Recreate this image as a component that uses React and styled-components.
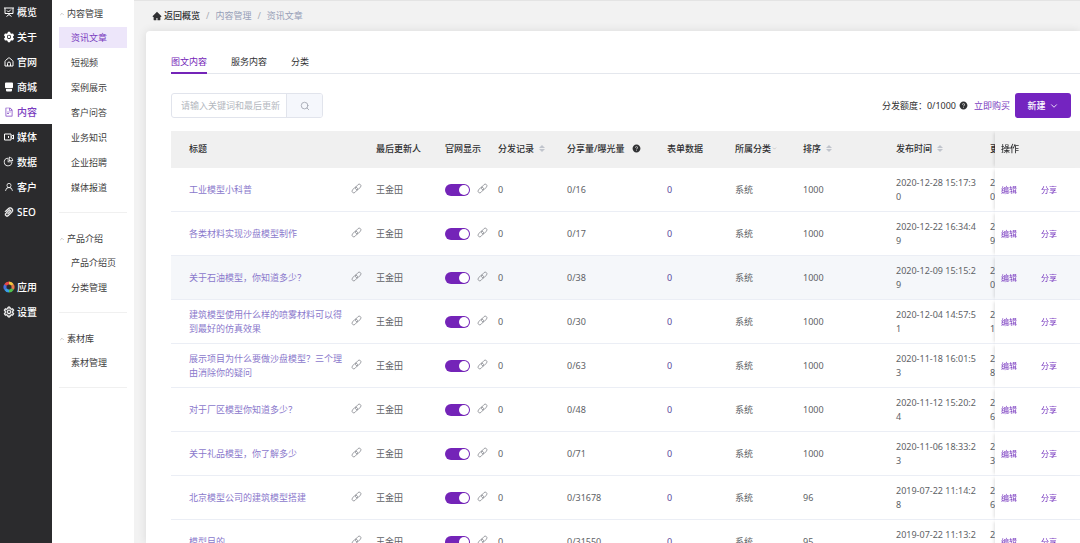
// Necessary Import
import React, { useState } from "react";
import styled, { createGlobalStyle, css } from "styled-components";

// Icons
import { ChevronDown, ChevronUp, Search } from "lucide-react";
import {
  AiFillSetting,
  AiFillHome,
  AiFillQuestionCircle,
  AiOutlineFileText,
  AiOutlinePieChart,
  AiOutlineUser,
  AiOutlinePaperClip,
  AiOutlineSetting,
} from "react-icons/ai";

const BoardIcon = () => (
  <svg viewBox="0 0 20 20" width="10" height="10" fill="none" stroke="currentColor" strokeWidth="2">
    <path d="M0 2h20M2 2v11h16V2M10 13v2M5 19l5-4l5 4" />
    <path d="M6 7l3 3l5-5" />
  </svg>
);

const HouseIcon = () => (
  <svg viewBox="0 0 20 20" width="10" height="10" fill="none" stroke="currentColor" strokeWidth="2">
    <path d="M2 18V9a2 2 0 0 1 1-2l6-5a2 2 0 0 1 2 0l6 5a2 2 0 0 1 1 2v9H2z" />
    <path d="M7 18v-5a3 3 0 0 1 6 0v5" />
  </svg>
);

const ShopIcon = () => (
  <svg viewBox="0 0 20 20" width="10" height="10" fill="currentColor">
    <path d="M4 1h12a2 2 0 0 1 2 2v8a3 3 0 0 1-4 1a3 3 0 0 1-4 0a3 3 0 0 1-4 0A3 3 0 0 1 2 11V3a2 2 0 0 1 2-2z" />
    <path d="M4 14h12v3a2 2 0 0 1-2 2H6a2 2 0 0 1-2-2z" />
  </svg>
);

const CameraIcon = () => (
  <svg viewBox="0 0 20 20" width="10" height="10" fill="none" stroke="currentColor" strokeWidth="2">
    <path d="M1 4h13v12H1z" />
    <path d="M14 9l5-3v8l-5-3" />
    <path d="M9 8v4" />
  </svg>
);

const AppsIcon = () => (
  <svg viewBox="0 0 24 24" width="12" height="12" fill="none" strokeWidth="6">
    <path d="M12 4a8 8 0 0 1 7 4" stroke="#f4c63d" />
    <path d="M19 8a8 8 0 0 1 0 8" stroke="#e8784a" />
    <path d="M19 16a8 8 0 0 1-7 4" stroke="#4fc04f" />
    <path d="M12 20a8 8 0 0 1-7-4" stroke="#3aa0e8" />
    <path d="M5 16a8 8 0 0 1 0-8" stroke="#4a6fe0" />
    <path d="M5 8a8 8 0 0 1 7-4" stroke="#e8484a" />
  </svg>
);

const ChainIcon = () => (
  <svg viewBox="0 0 22 22" width="11" height="11" fill="none" stroke="currentColor" strokeWidth="1.6">
    <g transform="rotate(-48 11 11)">
      <rect x="0" y="7" width="13" height="7" rx="3.5" />
      <rect x="9" y="8" width="13" height="7" rx="3.5" />
    </g>
  </svg>
);

const SortIcon = () => (
  <svg viewBox="0 0 6 9" width="6" height="9" fill="#c0c4cc">
    <path d="M0 4L3 1L6 4z" />
    <path d="M0 5L3 8L6 5z" />
  </svg>
);

const mainNav = [
  { nom: "概览", icon: <BoardIcon /> },
  { nom: "关于", icon: <AiFillSetting size={12} /> },
  { nom: "官网", icon: <HouseIcon /> },
  { nom: "商城", icon: <ShopIcon /> },
  { nom: "内容", icon: <AiOutlineFileText size={10} />, active: true },
  { nom: "媒体", icon: <CameraIcon /> },
  { nom: "数据", icon: <AiOutlinePieChart size={11} /> },
  { nom: "客户", icon: <AiOutlineUser size={10} /> },
  { nom: "SEO", icon: <AiOutlinePaperClip size={12} strokeWidth={40} stroke="currentColor" /> },
];

const toolNav = [
  { nom: "应用", icon: <AppsIcon /> },
  { nom: "设置", icon: <AiOutlineSetting size={12} strokeWidth={40} stroke="currentColor" /> },
];

const groups = [
  {
    nom: "内容管理",
    items: ["资讯文章", "短视频", "案例展示", "客户问答", "业务知识", "企业招聘", "媒体报道"],
  },
  { nom: "产品介绍", items: ["产品介绍页", "分类管理"] },
  { nom: "素材库", items: ["素材管理"] },
];

const articles = [
  { titre: "工业模型小科普", vues: "0/16", ordre: "1000", date: "2020-12-28 15:17:30", maj: "2020-12-28 15:17:30" },
  { titre: "各类材料实现沙盘模型制作", vues: "0/17", ordre: "1000", date: "2020-12-22 16:34:49", maj: "2020-12-22 16:34:49" },
  { titre: "关于石油模型，你知道多少？", vues: "0/38", ordre: "1000", date: "2020-12-09 15:15:29", maj: "2020-12-09 15:15:30", hover: true },
  { titre: "建筑模型使用什么样的喷雾材料可以得到最好的仿真效果", vues: "0/30", ordre: "1000", date: "2020-12-04 14:57:51", maj: "2020-12-04 14:57:51" },
  { titre: "展示项目为什么要做沙盘模型？三个理由消除你的疑问", vues: "0/63", ordre: "1000", date: "2020-11-18 16:01:53", maj: "2020-11-18 16:01:58" },
  { titre: "对于厂区模型你知道多少？", vues: "0/48", ordre: "1000", date: "2020-11-12 15:20:24", maj: "2020-11-12 15:20:26" },
  { titre: "关于礼品模型，你了解多少", vues: "0/71", ordre: "1000", date: "2020-11-06 18:33:23", maj: "2020-11-06 18:33:23" },
  { titre: "北京模型公司的建筑模型搭建", vues: "0/31678", ordre: "96", date: "2019-07-22 11:14:28", maj: "2019-07-22 11:14:26" },
  { titre: "模型目的", vues: "0/31550", ordre: "95", date: "2019-07-22 11:13:25", maj: "2019-07-22 11:13:25" },
];

const ArticleRow = ({ article }) => {
  const [visible, setVisible] = useState(true);

  return (
    <Row $hover={article.hover}>
      <Cell $first>
        <TitleBox>
          <TitleLink href="#">{article.titre}</TitleLink>
          <ChainButton aria-label="复制链接">
            <ChainIcon />
          </ChainButton>
        </TitleBox>
      </Cell>
      <Cell>王金田</Cell>
      <Cell>
        <SwitchBox>
          <Switch
            type="checkbox"
            aria-label="官网显示"
            checked={visible}
            onChange={() => setVisible(!visible)}
          />
          <ChainButton aria-label="官网链接">
            <ChainIcon />
          </ChainButton>
        </SwitchBox>
      </Cell>
      <Cell>0</Cell>
      <Cell>{article.vues}</Cell>
      <Cell>
        <CountLink href="#">0</CountLink>
      </Cell>
      <Cell>系统</Cell>
      <Cell>{article.ordre}</Cell>
      <Cell>{article.date}</Cell>
      <Cell>{article.maj}</Cell>
      <FixedCell>
        <Actions>
          <ActionLink href="#">编辑</ActionLink>
          <ActionLink href="#">分享</ActionLink>
        </Actions>
      </FixedCell>
    </Row>
  );
};

const App = () => {
  const [onglet, setOnglet] = useState("图文内容");

  return (
    <>
      <GlobalStyle />
      <Page>
        <Rail>
          {mainNav.map(({ nom, icon, active }) => (
            <RailLink href="#" key={nom} $active={active}>
              <RailIcon>{icon}</RailIcon>
              {nom}
            </RailLink>
          ))}
          <RailTools>
            {toolNav.map(({ nom, icon }) => (
              <RailLink href="#" key={nom}>
                <RailIcon>{icon}</RailIcon>
                {nom}
              </RailLink>
            ))}
          </RailTools>
        </Rail>

        <SubMenu>
          {groups.map((group) => (
            <Group key={group.nom}>
              <GroupButton>
                <ChevronUp size={6} color="#999999" />
                {group.nom}
              </GroupButton>
              {group.items.map((item) => (
                <SubLink href="#" key={item} $active={item === "资讯文章"}>
                  {item}
                </SubLink>
              ))}
            </Group>
          ))}
        </SubMenu>

        <Main>
          <Breadcrumb>
            <HomeLink href="#">
              <AiFillHome size={10} />
              返回概览
            </HomeLink>
            <span>/</span>
            <CrumbLink href="#">内容管理</CrumbLink>
            <span>/</span>
            <CrumbLink href="#">资讯文章</CrumbLink>
          </Breadcrumb>

          <Card>
            <Tabs>
              {["图文内容", "服务内容", "分类"].map((nom) => (
                <Tab key={nom} $active={nom === onglet} onClick={() => setOnglet(nom)}>
                  {nom}
                </Tab>
              ))}
            </Tabs>

            <Toolbar>
              <SearchBox>
                <SearchInput aria-label="搜索" placeholder="请输入关键词和最后更新" />
                <SearchButton aria-label="搜索">
                  <Search size={10} />
                </SearchButton>
              </SearchBox>
              <Quota>
                <span>分发额度：0/1000</span>
                <AiFillQuestionCircle size={9} />
                <BuyLink href="#">立即购买</BuyLink>
                <CreateButton>
                  新建
                  <ChevronDown size={10} />
                </CreateButton>
              </Quota>
            </Toolbar>

            <TableBox>
              <Table>
                <colgroup>
                  <Col />
                  <Col $w={69} />
                  <Col $w={53} />
                  <Col $w={69} />
                  <Col $w={100} />
                  <Col $w={68} />
                  <Col $w={68} />
                  <Col $w={93} />
                  <Col $w={94} />
                  <Col $w={94} />
                  <Col $w={85} />
                </colgroup>
                <thead>
                  <tr>
                    <Head $first>标题</Head>
                    <Head>最后更新人</Head>
                    <Head>官网显示</Head>
                    <Head>
                      <HeadLabel>分发记录 <SortIcon /></HeadLabel>
                    </Head>
                    <Head>
                      <HeadLabel $gap={8}>分享量/曝光量 <AiFillQuestionCircle size={9} /></HeadLabel>
                    </Head>
                    <Head>表单数据</Head>
                    <Head>
                      <HeadLabel $gap={1}>所属分类 <ChevronDown size={5} color="#999999" /></HeadLabel>
                    </Head>
                    <Head>
                      <HeadLabel>排序 <SortIcon /></HeadLabel>
                    </Head>
                    <Head>
                      <HeadLabel>发布时间 <SortIcon /></HeadLabel>
                    </Head>
                    <Head>更新时间</Head>
                    <FixedHead>操作</FixedHead>
                  </tr>
                </thead>
                <tbody>
                  {articles.map((article) => (
                    <ArticleRow key={article.titre} article={article} />
                  ))}
                </tbody>
              </Table>
            </TableBox>
          </Card>
        </Main>
      </Page>
    </>
  );
};

export default App;

const GlobalStyle = createGlobalStyle`
  * {
    box-sizing: border-box;
  }

  body {
    margin: 0;
    overflow: hidden;
    font-family: "Noto Sans", "Noto Sans CJK SC", sans-serif;
    font-size: 9px;
    line-height: 14px;
    color: #606266;
    background-color: #f2f2f2;
  }

  a {
    text-decoration: none;
    color: inherit;
  }

  button, input {
    margin: 0;
    padding: 0;
    border: none;
    background: none;
    font: inherit;
    color: inherit;
  }

  button {
    cursor: pointer;
  }

  svg {
    flex-shrink: 0;
  }
`;

const Page = styled.div`
  display: flex;
  height: 100vh;
  overflow: hidden;
`;

const Rail = styled.nav`
  display: flex;
  flex-direction: column;
  flex-shrink: 0;
  width: 52px;
  background-color: #2b2b2d;

  > a:first-child {
    height: 24px;
  }
`;

const RailLink = styled.a`
  display: flex;
  align-items: center;
  gap: 2px;
  height: 25px;
  padding-left: 2px;
  color: #ffffff;
  font-size: 10px;
  font-weight: 500;

  ${({ $active }) =>
    $active &&
    css`
      color: #7a3cc0;
      background-color: #ffffff;
    `}
`;

const RailIcon = styled.span`
  display: flex;
  justify-content: center;
  width: 13px;
`;

const RailTools = styled.div`
  margin-top: 50px;
`;

const SubMenu = styled.nav`
  flex-shrink: 0;
  width: 82px;
  padding: 0 7px;
  background-color: #ffffff;
`;

const Group = styled.div`
  display: flex;
  flex-direction: column;
  padding-bottom: 12px;
  margin-bottom: 12px;
  border-bottom: 1px solid #f0f0f0;
`;

const GroupButton = styled.button`
  display: flex;
  align-items: center;
  gap: 2px;
  height: 25px;
  padding-top: 2px;
  color: #404040;
`;

const SubLink = styled.a`
  height: 21px;
  margin: 2px 0;
  padding-left: 12px;
  line-height: 21px;
  color: ${({ $active }) => ($active ? "#7a3cc0" : "#404040")};
  background-color: ${({ $active }) => ($active ? "#ede6fa" : "transparent")};
`;

const Main = styled.main`
  display: flex;
  flex: 1;
  flex-direction: column;
  min-width: 0;
  padding-left: 12px;
  border-top: 1px solid #e4e4e4;
`;

const Breadcrumb = styled.nav`
  display: flex;
  align-items: center;
  gap: 6px;
  height: 30px;
  padding-left: 6px;
  color: #a8abb2;
`;

const HomeLink = styled.a`
  display: flex;
  align-items: center;
  gap: 2px;
  color: #303133;
  font-weight: 500;
`;

const CrumbLink = styled.a`
  color: #97a0b8;
`;

const Card = styled.section`
  flex: 1;
  min-height: 0;
  padding: 21px 0 0 25px;
  overflow: hidden;
  background-color: #ffffff;
  border-radius: 4px 0 0 0;
  box-shadow: 0 0 10px rgba(0, 0, 0, 0.1);
`;

const Tabs = styled.div`
  display: flex;
  gap: 24px;
  border-bottom: 1px solid #e4e7ed;
`;

const Tab = styled.button`
  height: 22px;
  margin-bottom: -1px;
  color: ${({ $active }) => ($active ? "#7424b8" : "#303133")};
  border-bottom: 2px solid ${({ $active }) => ($active ? "#7424b8" : "transparent")};
`;

const Toolbar = styled.div`
  display: flex;
  justify-content: space-between;
  align-items: center;
  margin: 19px 9px 13px 0;
`;

const SearchBox = styled.div`
  display: flex;
  width: 152px;
  height: 25px;
  border: 1px solid #e1e4ec;
  border-radius: 3px;
  overflow: hidden;
`;

const SearchInput = styled.input`
  flex: 1;
  min-width: 0;
  padding-left: 9px;

  &::placeholder {
    color: #b4b8c0;
  }
`;

const SearchButton = styled.button`
  display: flex;
  justify-content: center;
  align-items: center;
  width: 36px;
  color: #a0a4ae;
  background-color: #f5f7fc;
  border-left: 1px solid #e1e4ec;
`;

const Quota = styled.div`
  display: flex;
  align-items: center;
  gap: 3px;
  color: #303133;
`;

const BuyLink = styled.a`
  margin: 0 2px 0 3px;
  color: #7a3cc0;
`;

const CreateButton = styled.button`
  display: flex;
  justify-content: center;
  align-items: center;
  gap: 3px;
  width: 56px;
  height: 25px;
  color: #ffffff;
  font-weight: 500;
  background-color: #7424c0;
  border-radius: 3px;
`;

const TableBox = styled.div`
  overflow: hidden;
`;

const Table = styled.table`
  width: 100%;
  min-width: 992px;
  table-layout: fixed;
  border-collapse: separate;
  border-spacing: 0;
`;

const Col = styled.col`
  width: ${({ $w }) => ($w ? `${$w}px` : "auto")};
`;

const Head = styled.th`
  height: 37px;
  padding: 0 0 2px ${({ $first }) => ($first ? "18px" : "6px")};
  text-align: left;
  font-weight: 500;
  color: #303133;
  white-space: nowrap;
  background-color: #f0f0f0;
`;

const HeadLabel = styled.span`
  display: flex;
  align-items: center;
  gap: ${({ $gap = 5 }) => $gap}px;
`;

const Cell = styled.td`
  height: 44px;
  padding: 0 6px 0 ${({ $first }) => ($first ? "18px" : "6px")};
  word-break: break-all;
  border-bottom: 1px solid #ebeef5;
`;

const fixedRight = css`
  position: sticky;
  right: 0;
  box-shadow: -3px 0 3px -2px rgba(0, 0, 0, 0.12);
`;

const FixedHead = styled(Head)`
  ${fixedRight}
`;

const FixedCell = styled(Cell)`
  ${fixedRight}
`;

const Row = styled.tr`
  > td {
    background-color: ${({ $hover }) => ($hover ? "#f5f7fa" : "#ffffff")};
  }
`;

const TitleBox = styled.div`
  display: flex;
  justify-content: space-between;
  align-items: center;
  gap: 8px;
  padding-right: 2px;
`;

const TitleLink = styled.a`
  color: #8a78cc;
`;

const ChainButton = styled.button`
  display: flex;
  padding-bottom: 3px;
  color: #909399;
`;

const SwitchBox = styled.div`
  display: flex;
  align-items: center;
  gap: 7px;
`;

const Switch = styled.input`
  display: flex;
  align-items: center;
  flex-shrink: 0;
  width: 25px;
  height: 12px;
  padding: 1px;
  appearance: none;
  cursor: pointer;
  background-color: #c0c4cc;
  border-radius: 6px;

  &::before {
    content: "";
    width: 10px;
    height: 10px;
    background-color: #ffffff;
    border-radius: 50%;
  }

  &:checked {
    justify-content: flex-end;
    background-color: #7424b8;
  }
`;

const CountLink = styled.a`
  color: #5a4a9c;
`;

const Actions = styled.div`
  display: flex;
  gap: 24px;
`;

const ActionLink = styled.a`
  font-size: 8px;
  color: #7a3cc0;
`;
